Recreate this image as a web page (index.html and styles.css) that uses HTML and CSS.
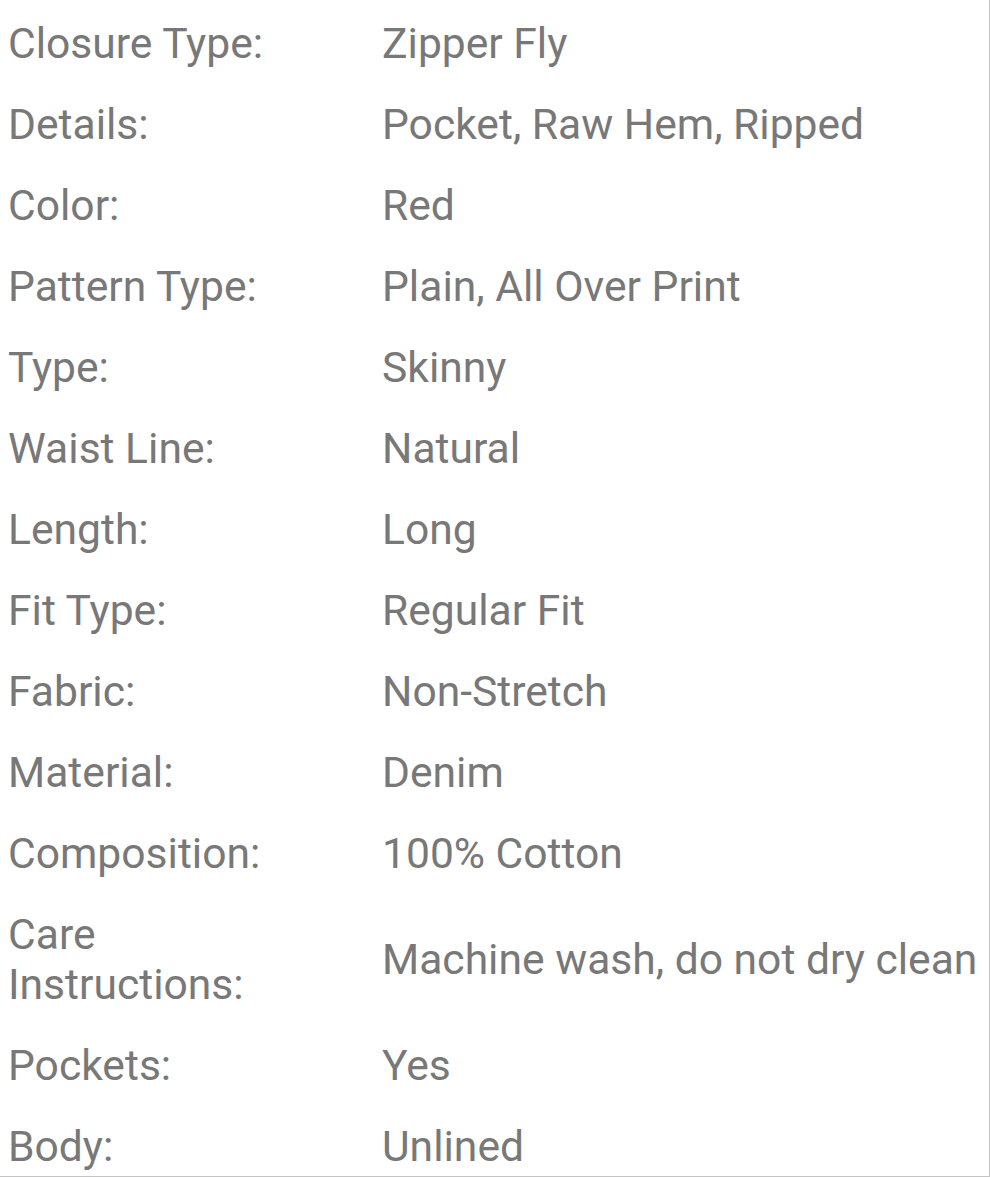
FILE: index.html
```html
<!DOCTYPE html>
<html>
<head>
<meta charset="utf-8">
<link rel="stylesheet" href="styles.css">
</head>
<body>
<div class="specs">
  <div class="row"><div class="label">Closure Type:</div><div class="value">Zipper Fly</div></div>
  <div class="row"><div class="label">Details:</div><div class="value">Pocket, Raw Hem, Ripped</div></div>
  <div class="row"><div class="label">Color:</div><div class="value">Red</div></div>
  <div class="row"><div class="label">Pattern Type:</div><div class="value">Plain, All Over Print</div></div>
  <div class="row"><div class="label">Type:</div><div class="value">Skinny</div></div>
  <div class="row"><div class="label">Waist Line:</div><div class="value">Natural</div></div>
  <div class="row"><div class="label">Length:</div><div class="value">Long</div></div>
  <div class="row"><div class="label">Fit Type:</div><div class="value">Regular Fit</div></div>
  <div class="row"><div class="label">Fabric:</div><div class="value">Non-Stretch</div></div>
  <div class="row"><div class="label">Material:</div><div class="value">Denim</div></div>
  <div class="row"><div class="label">Composition:</div><div class="value">100% Cotton</div></div>
  <div class="row"><div class="label">Care<br>Instructions:</div><div class="value">Machine wash, do not dry clean</div></div>
  <div class="row"><div class="label">Pockets:</div><div class="value">Yes</div></div>
  <div class="row"><div class="label">Body:</div><div class="value">Unlined</div></div>
</div>
</body>
</html>
```

FILE: styles.css
```css
html, body {
  margin: 0;
  padding: 0;
  background: #fff;
}
.specs {
  width: 989px;
  height: 1176px;
  border-right: 1px solid #c4c4c4;
  border-bottom: 1px solid #c4c4c4;
  overflow: hidden;
  font-family: Roboto, "Liberation Sans", sans-serif;
  font-size: 42.6px;
  line-height: 50px;
  color: #787878;
}
.row {
  display: grid;
  grid-template-columns: 374px 1fr;
  align-items: center;
  padding: 18px 0 13px 8px;
}
.label, .value {
  white-space: nowrap;
}
```
